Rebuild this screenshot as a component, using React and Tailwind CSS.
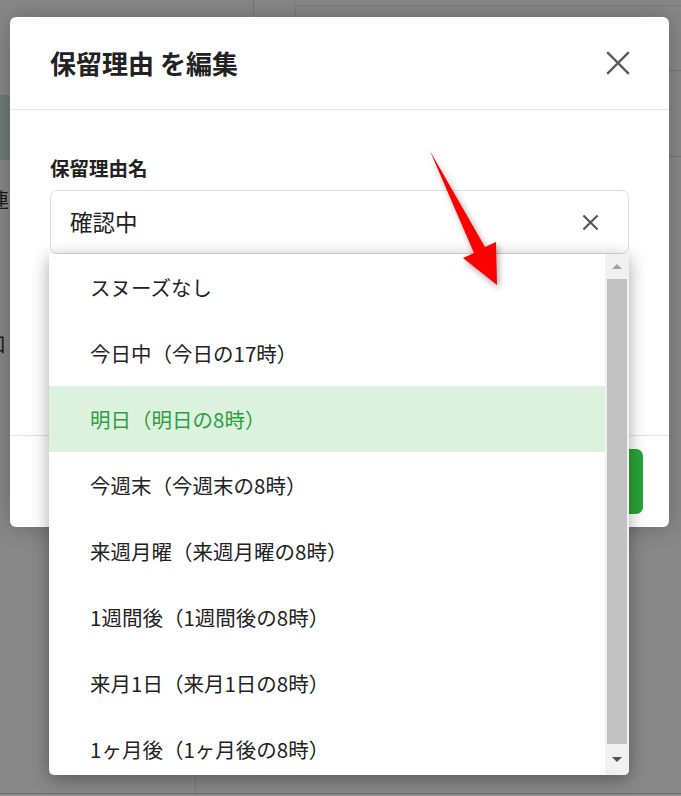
import React from 'react';

const options = [
  'スヌーズなし',
  '今日中（今日の17時）',
  '明日（明日の8時）',
  '今週末（今週末の8時）',
  '来週月曜（来週月曜の8時）',
  '1週間後（1週間後の8時）',
  '来月1日（来月1日の8時）',
  '1ヶ月後（1ヶ月後の8時）',
];

function CloseIcon({ size, stroke, className }) {
  return (
    <svg width={size} height={size} viewBox="0 0 24 24" className={className}>
      <path d="M2 2L22 22M22 2L2 22" stroke="currentColor" strokeWidth={stroke} strokeLinecap="butt" />
    </svg>
  );
}

// dimmed page that sits behind the modal
function PageBehind() {
  return (
    <div className="flex h-full flex-col">
      <div className="flex h-[17px] shrink-0">
        <div className="w-[253px]" />
        <div className="w-px bg-[#787878]" />
        <div className="w-[41px]" />
        <div className="mt-[5px] flex-1 border-l border-t border-[#7b7b7b]" />
      </div>
      <div className="ml-[295px] mt-[53px] h-px bg-[#767676]" />
      <div className="mt-[24px] flex h-[65px]">
        <div className="w-[10px] bg-[#707b76]" />
        <div className="flex-1">
          <div className="ml-[285px] mt-[61px] h-px bg-[#767676]" />
        </div>
      </div>
      <div className="ml-[-11px] mt-[28px] text-[20px] leading-[24px] text-[#1c1c1c]">連</div>
      <div className="ml-[-14px] mt-[120px] text-[20px] leading-[24px] text-[#1c1c1c]">口</div>
      <div className="mt-auto flex h-[23px]">
        <div className="w-[195px]" />
        <div className="w-px bg-[#7a7a7a]" />
      </div>
      <div className="h-px bg-[#6a6a6a]" />
      <div className="h-[2px] bg-[#8d8d8d]" />
    </div>
  );
}

function SnoozeDropdown() {
  return (
    <div className="absolute left-[-1px] top-full z-10 flex h-[521px] w-[580px] overflow-hidden rounded-b-[5px] bg-white shadow-[0_4px_18px_rgba(0,0,0,0.35)]">
      <ul className="flex-1 text-[20.5px]">
        {options.map((o, i) => (
          <li
            key={o}
            className={
              i === 2
                ? 'flex h-[66px] items-center bg-[#ddf1df] pl-[41px] text-[#2f9e41]'
                : 'flex h-[66px] items-center pl-[41px] text-[#222]'
            }
          >
            {o}
          </li>
        ))}
      </ul>
      <div className="flex w-[24px] flex-col bg-[#f1f1f1]">
        <div className="flex h-[25px] items-center justify-center">
          <div className="h-0 w-0 border-x-[5px] border-b-[5px] border-x-transparent border-b-[#a3a3a3]" />
        </div>
        <div className="mx-[2px] h-[465px] bg-[#c1c1c1]" />
        <div className="flex flex-1 items-center justify-center">
          <div className="h-0 w-0 border-x-[5px] border-t-[5px] border-x-transparent border-t-[#505050]" />
        </div>
      </div>
    </div>
  );
}

export default function App() {
  return (
    <div className="relative h-[796px] w-[681px] overflow-hidden bg-[#888888] font-['Noto_Sans_CJK_JP','Noto_Sans',sans-serif]">
      <PageBehind />

      <div className="absolute inset-0 pl-[10px] pt-[17px]">
        <div className="flex h-[510px] w-[659px] flex-col rounded-md bg-white shadow-[0_0_24px_rgba(0,0,0,0.25)]">
          <div className="flex h-[93px] shrink-0 items-center justify-between border-b border-[#e3e3e3] pl-[40px] pr-[38px]">
            <h2 className="text-[26px] font-bold leading-none text-[#222]">保留理由 を編集</h2>
            <CloseIcon size={26} stroke={2.2} className="text-[#5c5c5c]" />
          </div>

          <div className="flex-1 px-[40px] pt-[45px]">
            <label className="mb-[9px] block text-[19.5px] font-bold leading-[26px] text-[#222]">保留理由名</label>
            <div className="relative">
              <div className="flex h-[64px] items-center justify-between rounded-[7px] border border-[#dedede] pl-[19px] pr-[29px] text-[22.5px] text-[#222]">
                <span>確認中</span>
                <CloseIcon size={17} stroke={3} className="text-[#555]" />
              </div>
              <SnoozeDropdown />
            </div>
          </div>

          <div className="flex h-[92px] shrink-0 items-center justify-end border-t border-[#e3e3e3] pr-[26px]">
            <button className="h-[65px] w-[130px] rounded-[7px] bg-[#28a437] text-[18px] font-bold text-white">保存</button>
          </div>
        </div>
      </div>

      <svg
        className="pointer-events-none absolute left-0 top-0 z-20"
        width="681"
        height="796"
        style={{ filter: 'drop-shadow(2px 3px 3px rgba(0,0,0,0.35))' }}
      >
        <polygon points="430,151 485,247 496,242 497,285 463,258 474,253" fill="#ff0000" />
      </svg>
    </div>
  );
}
